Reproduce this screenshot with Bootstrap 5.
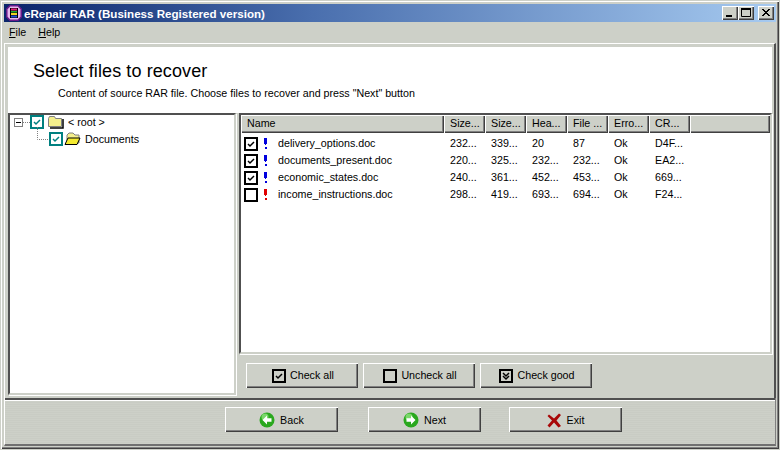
<!DOCTYPE html>
<html lang="en">
<head>
<meta charset="utf-8">
<title>eRepair RAR</title>
<link rel="stylesheet" href="https://cdn.jsdelivr.net/npm/bootstrap@5.3.0/dist/css/bootstrap.min.css">
<style>
html,body{margin:0;width:780px;height:450px;overflow:hidden;background:#cdd0c8}
body{font-family:"Liberation Sans",Arial,sans-serif;font-size:10.7px;line-height:13px;color:#000}
.win-frame{width:780px;height:450px;background:#cdd0c8;border:1px solid #cdd0c8;box-shadow:inset 1px 1px 0 #fff,inset -1px -1px 0 #404040,inset -2px -2px 0 #808080;padding:3px}
.title-strip{height:18px;background:linear-gradient(90deg,#0a246a 0%,#4a6fae 40%,#a6caf0 100%);padding:0 2px}
.title-text{font-weight:700;font-size:11.6px;color:#fff;margin-left:2px}
.cap-btn{width:16px;height:14px;background:#cdd0c8;box-shadow:inset 1px 1px 0 #fff,inset -1px -1px 0 #404040,inset -2px -2px 0 #808080}
.menu-strip{height:21px;padding-left:5px;gap:12px}
.menu-item u{text-underline-offset:1px}
.page-area{height:355px;border-top:1px solid #fff;border-left:1px solid #fff;border-right:2px solid #505050;padding:3px 2px 0 3px}
.head-panel{height:66px;background:#fff;padding:14px 0 0 25px}
.head-title{font-size:18px;letter-spacing:.1px;line-height:20px;margin:0;font-weight:400}
.head-sub{padding-left:25px;margin-top:6px;line-height:13px}
.split-zone{height:284px;gap:3px}
.tree-pane{width:228px;height:282px;background:#fff;border:2px solid;border-color:#505050 #cdd0c8 #cdd0c8 #505050;box-shadow:1px 1px 0 #fff;padding:0 0 0 4px}
.tree-line{height:14px;margin-bottom:3px;white-space:nowrap}
.tree-sub{padding-left:23px}
.exp-box{width:9px;height:9px;border:1px solid #808080;background:#fff;flex:none}
.dot-link{width:7px;border-top:1px dotted #808080;flex:none}
.right-pane{width:533px}
.list-box{height:241px;background:#fff;border:2px solid;border-color:#505050 #cdd0c8 #cdd0c8 #505050;box-shadow:1px 1px 0 #fff}
.col-strip{height:18px;background:#cdd0c8}
.col-cell{height:18px;padding:2px 0 0 6px;box-shadow:inset 1px 1px 0 #fff,inset -1px -1px 0 #404040,inset -2px -2px 0 #808080;white-space:nowrap;overflow:hidden;flex:0 0 41px}
.col-name{flex:0 0 203px}
.col-rest{flex:1 1 auto}
.file-row{height:17px;padding-left:3px;white-space:nowrap}
.cell-check{width:17px}
.cell-mark{width:14px;padding-left:3px}
.cell-name{width:169px;padding-left:3px}
.cell-val{width:41px;padding-left:6px}
.rows-box{padding-top:2px}
.tool-strip{padding:9px 0 0 7px;gap:5px}
.bevel-btn{background:#cdd0c8;border:0;border-radius:0;padding:0;color:#000;font-size:10.7px;line-height:13px;box-shadow:inset 1px 1px 0 #fff,inset -1px -1px 0 #404040,inset -2px -2px 0 #808080;display:flex;align-items:center;justify-content:center;gap:4px}
.bevel-btn:hover{background:#cdd0c8;color:#000}
.tool-btn{width:112px;height:25px;padding-left:2px}
.foot-box{height:48px;border-left:1px solid #fff;border-right:1px solid #808080;border-bottom:2px solid #707070;background:repeating-linear-gradient(0deg,#cdd0c8 0 1px,#c9ccc4 1px 2px)}
.foot-rule{height:3px;border-top:2px solid #505050;border-bottom:1px solid #fff}
.foot-strip{padding-top:6px;padding-left:220px;gap:30px}
.foot-btn{width:113px;height:25px;padding-top:1px;gap:5px}
.foot-btn-last{margin-left:-2px}
.svg-b{display:block;flex:none}
.svg-free{overflow:visible}
</style>
</head>
<body>
<div class="win-frame d-flex flex-column">
  <div class="title-strip d-flex align-items-center">
    <svg class="svg-b" width="16" height="16" viewBox="0 0 16 16"><path d="M4 .8h8L15.200 4v8L12 15.200H4L.8 12V4z" fill="#e6b8ee" stroke="#6a1a8a" stroke-width="1.500"/><rect x="4" y="3" width="8" height="10" fill="#000"/><rect x="5" y="3.500" width="6" height="2" fill="#e02080"/><rect x="5" y="6" width="6" height="1.500" fill="#20b030"/><rect x="5" y="8" width="6" height="2" fill="#f0d020"/><rect x="5" y="10.500" width="6" height="2" fill="#2050d0"/></svg>
    <span class="title-text flex-grow-1">eRepair RAR (Business Registered version)</span>
    <div class="d-flex">
      <div class="cap-btn"><svg class="svg-b" width="16" height="14"><rect x="4" y="9" width="6" height="2" fill="#000"/></svg></div>
      <div class="cap-btn"><svg class="svg-b" width="16" height="14"><path d="M3.500 3.500h9v7h-9z" fill="none" stroke="#000"/><rect x="3" y="2" width="10" height="2" fill="#000"/></svg></div>
      <div class="cap-btn ms-1"><svg class="svg-b" width="16" height="14"><path d="M4 3l7 7M5 3l7 7M11 3l-7 7M12 3l-7 7" stroke="#000"/></svg></div>
    </div>
  </div>
  <div class="menu-strip d-flex align-items-center">
    <span class="menu-item"><u>F</u>ile</span>
    <span class="menu-item"><u>H</u>elp</span>
  </div>
  <div class="page-area">
    <div class="head-panel">
      <h1 class="head-title">Select files to recover</h1>
      <div class="head-sub">Content of source RAR file. Choose files to recover and press "Next" button</div>
    </div>
    <div class="split-zone d-flex">
      <div class="tree-pane">
        <div class="tree-line d-flex align-items-center">
          <span class="exp-box d-flex align-items-center justify-content-center"><svg class="svg-b" width="7" height="7"><path d="M1 3.500h5" stroke="#000"/></svg></span>
          <span class="dot-link"></span>
          <svg class="svg-b" width="14" height="14" viewBox="0 0 14 14"><rect x="1" y="1" width="12" height="12" fill="#fff" stroke="#008080" stroke-width="2"/><path d="M4 7l2 2 4-4" fill="none" stroke="#008080" stroke-width="1.500"/></svg>
          <svg class="svg-b ms-1" width="16" height="14" viewBox="0 0 16 14"><path d="M.5 3.500l1-2h5l1 2h6v8H.5z" fill="#f4ef8c" stroke="#808080"/><path d="M15 4v9H2" fill="none" stroke="#000" stroke-width="1.500"/></svg>
          <span class="ms-1">&lt; root &gt;</span>
        </div>
        <div class="tree-line tree-sub d-flex align-items-center">
          <svg class="svg-b svg-free" width="12" height="14"><path d="M.5 -5v12.500h11" stroke="#808080" stroke-dasharray="1 1" fill="none"/></svg>
          <svg class="svg-b" width="14" height="14" viewBox="0 0 14 14"><rect x="1" y="1" width="12" height="12" fill="#fff" stroke="#008080" stroke-width="2"/><path d="M4 7l2 2 4-4" fill="none" stroke="#008080" stroke-width="1.500"/></svg>
          <svg class="svg-b" style="margin-left:1px" width="17" height="14" viewBox="0 0 17 14"><path d="M3 3l2-2h4l2 2h4v8H3z" fill="#f4ef8c" stroke="#808080"/><path d="M4 6h12l-3 6.500H1z" fill="#f4ea30" stroke="#000"/></svg>
          <span class="ms-1">Documents</span>
        </div>
      </div>
      <div class="right-pane">
        <div class="list-box d-flex flex-column">
          <div class="col-strip d-flex">
            <div class="col-cell col-name">Name</div>
            <div class="col-cell">Size...</div>
            <div class="col-cell">Size...</div>
            <div class="col-cell">Hea...</div>
            <div class="col-cell">File ...</div>
            <div class="col-cell">Erro...</div>
            <div class="col-cell">CR...</div>
            <div class="col-cell col-rest"></div>
          </div>
          <div class="rows-box">
            <div class="file-row d-flex align-items-center">
              <span class="cell-check"><svg class="svg-b" width="14" height="14"><rect x="1" y="1" width="12" height="12" fill="#fff" stroke="#000" stroke-width="2"/><path d="M4 7l2 2 4-4" fill="none" stroke="#000" stroke-width="1.500"/></svg></span>
              <span class="cell-mark"><svg class="svg-b" width="4" height="13"><path d="M0 1h3v6H2v1H1V7H0zM1 10h2v2H1z" fill="#00d"/></svg></span>
              <span class="cell-name">delivery_options.doc</span>
              <span class="cell-val">232...</span><span class="cell-val">339...</span><span class="cell-val">20</span><span class="cell-val">87</span><span class="cell-val">Ok</span><span class="cell-val">D4F...</span>
            </div>
            <div class="file-row d-flex align-items-center">
              <span class="cell-check"><svg class="svg-b" width="14" height="14"><rect x="1" y="1" width="12" height="12" fill="#fff" stroke="#000" stroke-width="2"/><path d="M4 7l2 2 4-4" fill="none" stroke="#000" stroke-width="1.500"/></svg></span>
              <span class="cell-mark"><svg class="svg-b" width="4" height="13"><path d="M0 1h3v6H2v1H1V7H0zM1 10h2v2H1z" fill="#00d"/></svg></span>
              <span class="cell-name">documents_present.doc</span>
              <span class="cell-val">220...</span><span class="cell-val">325...</span><span class="cell-val">232...</span><span class="cell-val">232...</span><span class="cell-val">Ok</span><span class="cell-val">EA2...</span>
            </div>
            <div class="file-row d-flex align-items-center">
              <span class="cell-check"><svg class="svg-b" width="14" height="14"><rect x="1" y="1" width="12" height="12" fill="#fff" stroke="#000" stroke-width="2"/><path d="M4 7l2 2 4-4" fill="none" stroke="#000" stroke-width="1.500"/></svg></span>
              <span class="cell-mark"><svg class="svg-b" width="4" height="13"><path d="M0 1h3v6H2v1H1V7H0zM1 10h2v2H1z" fill="#00d"/></svg></span>
              <span class="cell-name">economic_states.doc</span>
              <span class="cell-val">240...</span><span class="cell-val">361...</span><span class="cell-val">452...</span><span class="cell-val">453...</span><span class="cell-val">Ok</span><span class="cell-val">669...</span>
            </div>
            <div class="file-row d-flex align-items-center">
              <span class="cell-check"><svg class="svg-b" width="14" height="14"><rect x="1" y="1" width="12" height="12" fill="#fff" stroke="#000" stroke-width="2"/></svg></span>
              <span class="cell-mark"><svg class="svg-b" width="4" height="13"><path d="M0 1h3v6H2v1H1V7H0zM1 10h2v2H1z" fill="#e00000"/></svg></span>
              <span class="cell-name">income_instructions.doc</span>
              <span class="cell-val">298...</span><span class="cell-val">419...</span><span class="cell-val">693...</span><span class="cell-val">694...</span><span class="cell-val">Ok</span><span class="cell-val">F24...</span>
            </div>
          </div>
        </div>
        <div class="tool-strip d-flex">
          <button type="button" class="btn bevel-btn tool-btn"><svg class="svg-b" width="14" height="14"><rect x="1" y="1" width="12" height="12" fill="#cdd0c8" stroke="#000" stroke-width="2"/><path d="M4 7l2 2 4-4" fill="none" stroke="#000" stroke-width="1.500"/></svg>Check all</button>
          <button type="button" class="btn bevel-btn tool-btn"><svg class="svg-b" width="14" height="14"><rect x="1" y="1" width="12" height="12" fill="#cdd0c8" stroke="#000" stroke-width="2"/></svg>Uncheck all</button>
          <button type="button" class="btn bevel-btn tool-btn"><svg class="svg-b" width="14" height="14"><rect x="1" y="1" width="12" height="12" fill="#cdd0c8" stroke="#000" stroke-width="2"/><path d="M4 4l3 3 3-3M4 7l3 3 3-3" fill="none" stroke="#000" stroke-width="1.500"/></svg>Check good</button>
        </div>
      </div>
    </div>
  </div>
  <div class="foot-box">
    <div class="foot-rule"></div>
    <div class="foot-strip d-flex">
      <button type="button" class="btn bevel-btn foot-btn"><svg class="svg-b" width="16" height="16" viewBox="0 0 16 16"><circle cx="8" cy="8" r="7.500" fill="#2aa81e"/><circle cx="6" cy="5" r="3.500" fill="#7ad86a"/><path d="M8 3.500L3.500 8 8 12.500V9.800h4.500V6.200H8z" fill="#fff"/></svg>Back</button>
      <button type="button" class="btn bevel-btn foot-btn"><svg class="svg-b" width="16" height="16" viewBox="0 0 16 16"><circle cx="8" cy="8" r="7.500" fill="#2aa81e"/><circle cx="6" cy="5" r="3.500" fill="#7ad86a"/><path d="M8 3.500L12.500 8 8 12.500V9.800H3.500V6.200H8z" fill="#fff"/></svg>Next</button>
      <button type="button" class="btn bevel-btn foot-btn foot-btn-last"><svg class="svg-b" width="15" height="15" viewBox="0 0 15 15"><path d="M2 1.500L7 5.500 12 .5 14 2 9.500 7.500 14 13 11.500 14.500 7 9.500 2.500 14.500 .5 12.500 5 7.500 .5 3z" fill="#a80808"/></svg>Exit</button>
    </div>
  </div>
</div>
</body>
</html>
